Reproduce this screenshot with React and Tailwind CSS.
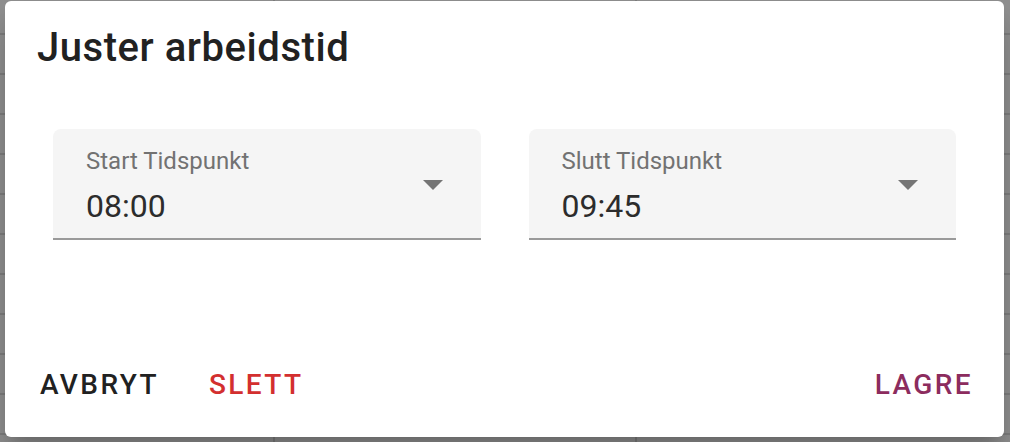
function CaretDown() {
  return (
    <svg viewBox="0 0 24 24" className="h-[48px] w-[48px] fill-[#757575]">
      <path d="M7 10l5 5 5-5z" />
    </svg>
  );
}

function TimeSelect({ label, value }) {
  return (
    <div className="relative h-[111px] flex-1 rounded-t-[8px] border-b-2 border-[#9a9a9a] bg-[#f5f5f5] pl-[33px]">
      <div className="pt-[18px] text-[24px] leading-[28px] text-[#727272]">{label}</div>
      <div className="mt-[12px] text-[32px] leading-[38px] text-[#2c2c2c]">{value}</div>
      <div className="absolute right-[24px] top-[31px]">
        <CaretDown />
      </div>
    </div>
  );
}

export default function App() {
  return (
    <div className="relative h-[442px] w-[1010px] overflow-hidden font-['Roboto',sans-serif]">
      {/* dimmed calendar behind the dialog */}
      <div className="flex h-full bg-[#8f8f8f] bg-[repeating-linear-gradient(to_bottom,transparent_0px,transparent_33px,#7c7c7c_33px,#7c7c7c_35px,transparent_35px,transparent_40px)]">
        <div className="w-[275px] border-r-2 border-[#7c7c7c]" />
        <div className="w-[362px] border-r-2 border-[#7c7c7c]" />
        <div className="flex-1" />
      </div>

      <div className="absolute left-[5px] top-[1px] flex h-[436px] w-[999px] flex-col rounded-[6px] bg-white shadow-[0_11px_15px_-7px_rgba(0,0,0,0.2),0_24px_38px_3px_rgba(0,0,0,0.14)]">
        <h2 className="pl-[32px] pt-[23px] text-[40px] font-medium leading-[48px] tracking-[0.55px] text-[#212121]">
          Juster arbeidstid
        </h2>

        <div className="mt-[57px] flex gap-[48px] px-[48px]">
          <TimeSelect label="Start Tidspunkt" value="08:00" />
          <TimeSelect label="Slutt Tidspunkt" value="09:45" />
        </div>

        <div className="mt-auto flex items-center gap-[18px] pb-[16px] pl-[19px] pr-[15px]">
          <button className="px-[16px] py-[12px] text-[28px] font-medium uppercase leading-[49px] tracking-[2.4px] text-[#212121]">
            Avbryt
          </button>
          <button className="px-[16px] py-[12px] text-[28px] font-medium uppercase leading-[49px] tracking-[2.4px] text-[#d32f2f]">
            Slett
          </button>
          <button className="ml-auto px-[16px] py-[12px] text-[28px] font-medium uppercase leading-[49px] tracking-[2.4px] text-[#8c2c5e]">
            Lagre
          </button>
        </div>
      </div>
    </div>
  );
}
